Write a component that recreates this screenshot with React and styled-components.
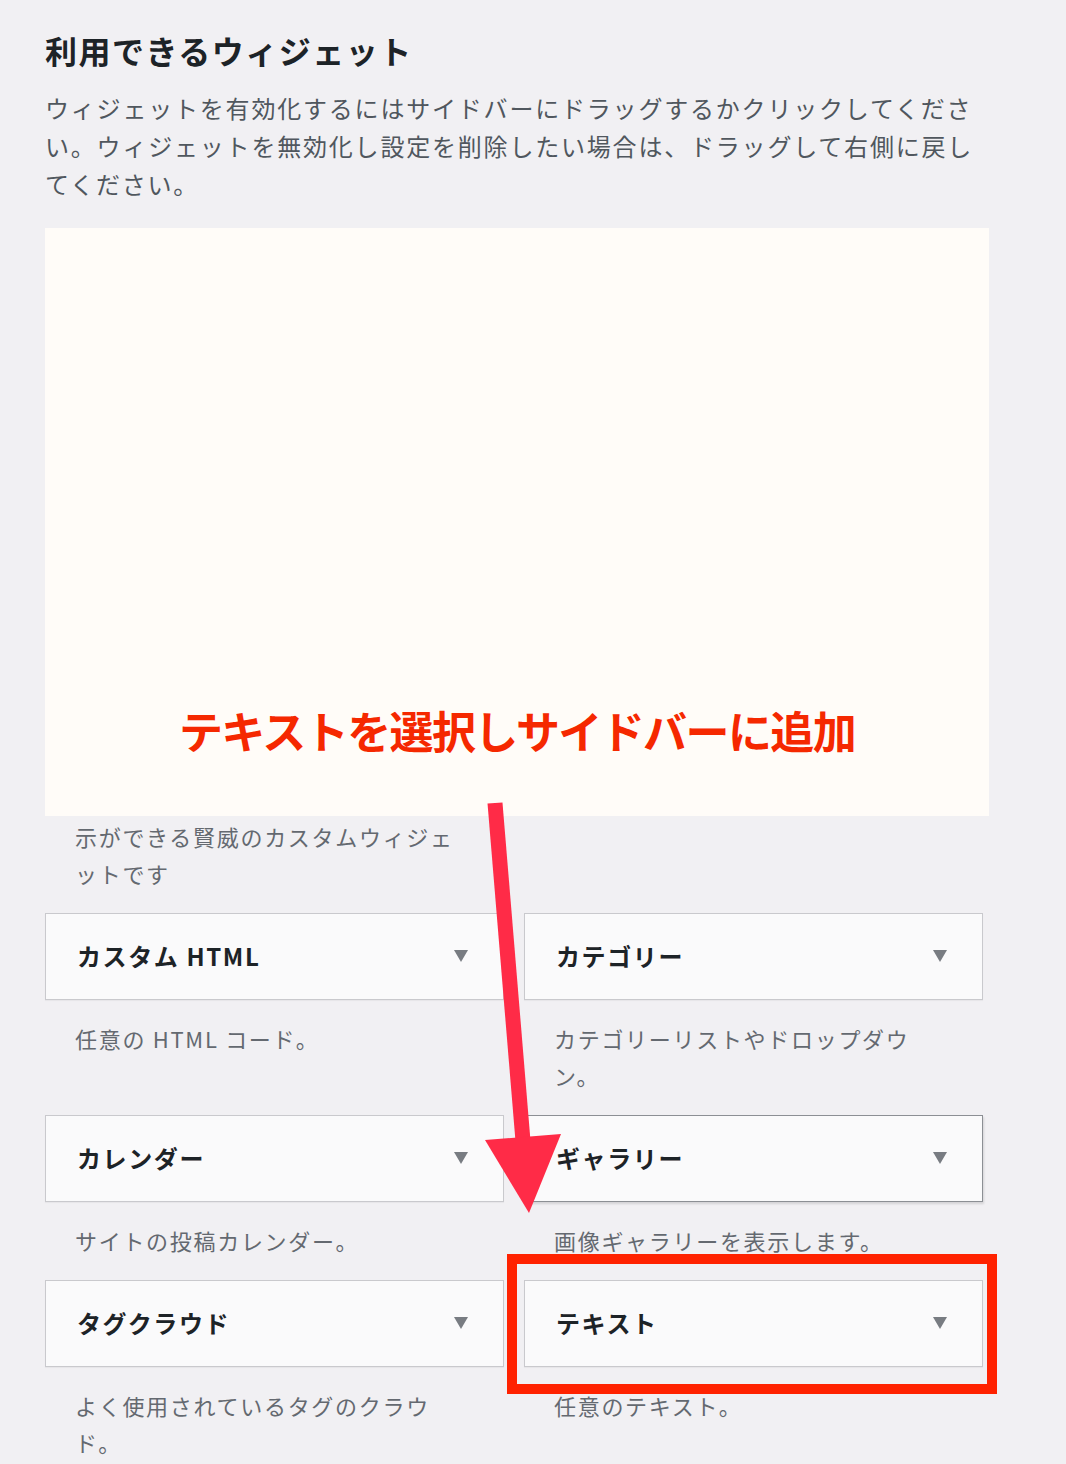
import React from "react";
import styled, { createGlobalStyle } from "styled-components";

const GlobalStyle = createGlobalStyle`
  html, body {
    margin: 0;
    padding: 0;
    background: #f1f0f3;
  }
  body {
    font-family: "Noto Sans CJK JP", "Noto Sans", sans-serif;
  }
`;

const Page = styled.div`
  position: relative;
  box-sizing: border-box;
  width: 1066px;
  min-height: 1464px;
  padding: 28px 83px 0 45px;
  background: #f1f0f3;
  overflow: hidden;
`;

const Heading = styled.h2`
  margin: 0;
  font-size: 32px;
  line-height: 44px;
  font-weight: 700;
  letter-spacing: 1.5px;
  color: #1d2327;
`;

const Intro = styled.p`
  margin: 17px 0 0;
  font-size: 24px;
  line-height: 38px;
  letter-spacing: 1.8px;
  color: #50575e;
  line-break: normal;
`;

const WidgetGrid = styled.div`
  margin-top: 30px;
  display: grid;
  grid-template-columns: 1fr 1fr;
  column-gap: 20px;
  align-items: start;
`;

const WidgetItem = styled.div`
  display: flex;
  flex-direction: column;
  min-width: 0;
`;

const WidgetCard = styled.div`
  box-sizing: border-box;
  height: 87px;
  display: flex;
  align-items: center;
  justify-content: space-between;
  padding: 0 35px 2px 31px;
  background: #fafafb;
  border: 1px solid ${(p) => (p.$active ? "#8c8f94" : "#c9c9cd")};
  box-shadow: ${(p) =>
    p.$active ? "1px 2px 2px rgba(0,0,0,0.12)" : "0 1px 1px rgba(0,0,0,0.04)"};
  visibility: ${(p) => (p.$covered ? "hidden" : "visible")};
`;

const WidgetTitle = styled.span`
  font-size: 24px;
  font-weight: 700;
  letter-spacing: 1.6px;
  color: #1d2327;
  white-space: nowrap;
`;

const Caret = styled.span`
  width: 0;
  height: 0;
  border-left: 7.5px solid transparent;
  border-right: 7.5px solid transparent;
  border-top: 12px solid #787c82;
`;

const WidgetDesc = styled.p`
  margin: 0;
  padding: 20px 40px 21px 30px;
  font-size: 22px;
  line-height: 37px;
  letter-spacing: 1.7px;
  color: #646970;
  line-break: normal;
  visibility: ${(p) => (p.$covered ? "hidden" : "visible")};
`;

const Overlay = styled.div`
  position: absolute;
  left: 45px;
  top: 228px;
  width: 944px;
  height: 588px;
  background: #fffcf8;
  display: flex;
  align-items: flex-end;
  justify-content: center;
  box-sizing: border-box;
  padding-bottom: 56px;
  z-index: 2;
`;

const OverlayText = styled.div`
  font-size: 44px;
  line-height: 60px;
  font-weight: 700;
  letter-spacing: -1.6px;
  color: #f52800;
  white-space: nowrap;
`;

const ArrowSvg = styled.svg`
  position: absolute;
  left: 480px;
  top: 795px;
  width: 90px;
  height: 425px;
  z-index: 4;
  pointer-events: none;
`;

const Highlight = styled.div`
  position: absolute;
  left: 507px;
  top: 1254px;
  width: 490px;
  height: 140px;
  box-sizing: border-box;
  border: 10px solid #ff2200;
  z-index: 3;
  pointer-events: none;
`;

/* The first three rows lie under the annotation panel; only the tail of one
   description shows below it. */
const widgets = [
  { title: "賢威 最新記事", desc: "賢威の最新記事を表示するカスタムウィジェットです", covered: true, descCovered: true },
  { title: "アーカイブ", desc: "サイトの投稿の月別アーカイブ。", covered: true, descCovered: true },
  {
    title: "賢威 人気記事",
    desc: "賢威の人気記事ランキングを画像付きで表示できるカスタムウィジェットです",
    covered: true,
    descCovered: true,
  },
  { title: "音声", desc: "音声プレーヤーを表示します。", covered: true, descCovered: true },
  {
    title: "賢威 プロフィール",
    desc: "賢威のプロフィールや情報などの表示ができる賢威のカスタムウィジェットです",
    covered: true,
  },
  { title: "画像", desc: "画像を表示します。", covered: true, descCovered: true },
  { title: "カスタム HTML", desc: "任意の HTML コード。" },
  { title: "カテゴリー", desc: "カテゴリーリストやドロップダウン。" },
  { title: "カレンダー", desc: "サイトの投稿カレンダー。" },
  { title: "ギャラリー", desc: "画像ギャラリーを表示します。", active: true },
  { title: "タグクラウド", desc: "よく使用されているタグのクラウド。" },
  { title: "テキスト", desc: "任意のテキスト。" },
];

export default function App() {
  return (
    <>
      <GlobalStyle />
      <Page>
        <Heading>利用できるウィジェット</Heading>
        <Intro>
          ウィジェットを有効化するにはサイドバーにドラッグするかクリックしてください。ウィジェットを無効化し設定を削除したい場合は、ドラッグして右側に戻してください。
        </Intro>
        <WidgetGrid>
          {widgets.map((w) => (
            <WidgetItem key={w.title}>
              <WidgetCard $active={w.active} $covered={w.covered}>
                <WidgetTitle>{w.title}</WidgetTitle>
                <Caret />
              </WidgetCard>
              <WidgetDesc $covered={w.descCovered}>{w.desc}</WidgetDesc>
            </WidgetItem>
          ))}
        </WidgetGrid>

        <Overlay>
          <OverlayText>テキストを選択しサイドバーに追加</OverlayText>
        </Overlay>

        <ArrowSvg viewBox="0 0 90 425">
          <line
            x1="15"
            y1="8"
            x2="43"
            y2="346"
            stroke="#ff2b47"
            strokeWidth="15"
          />
          <polygon points="5,345 81,339 49,418" fill="#ff2b47" />
        </ArrowSvg>

        <Highlight />
      </Page>
    </>
  );
}
